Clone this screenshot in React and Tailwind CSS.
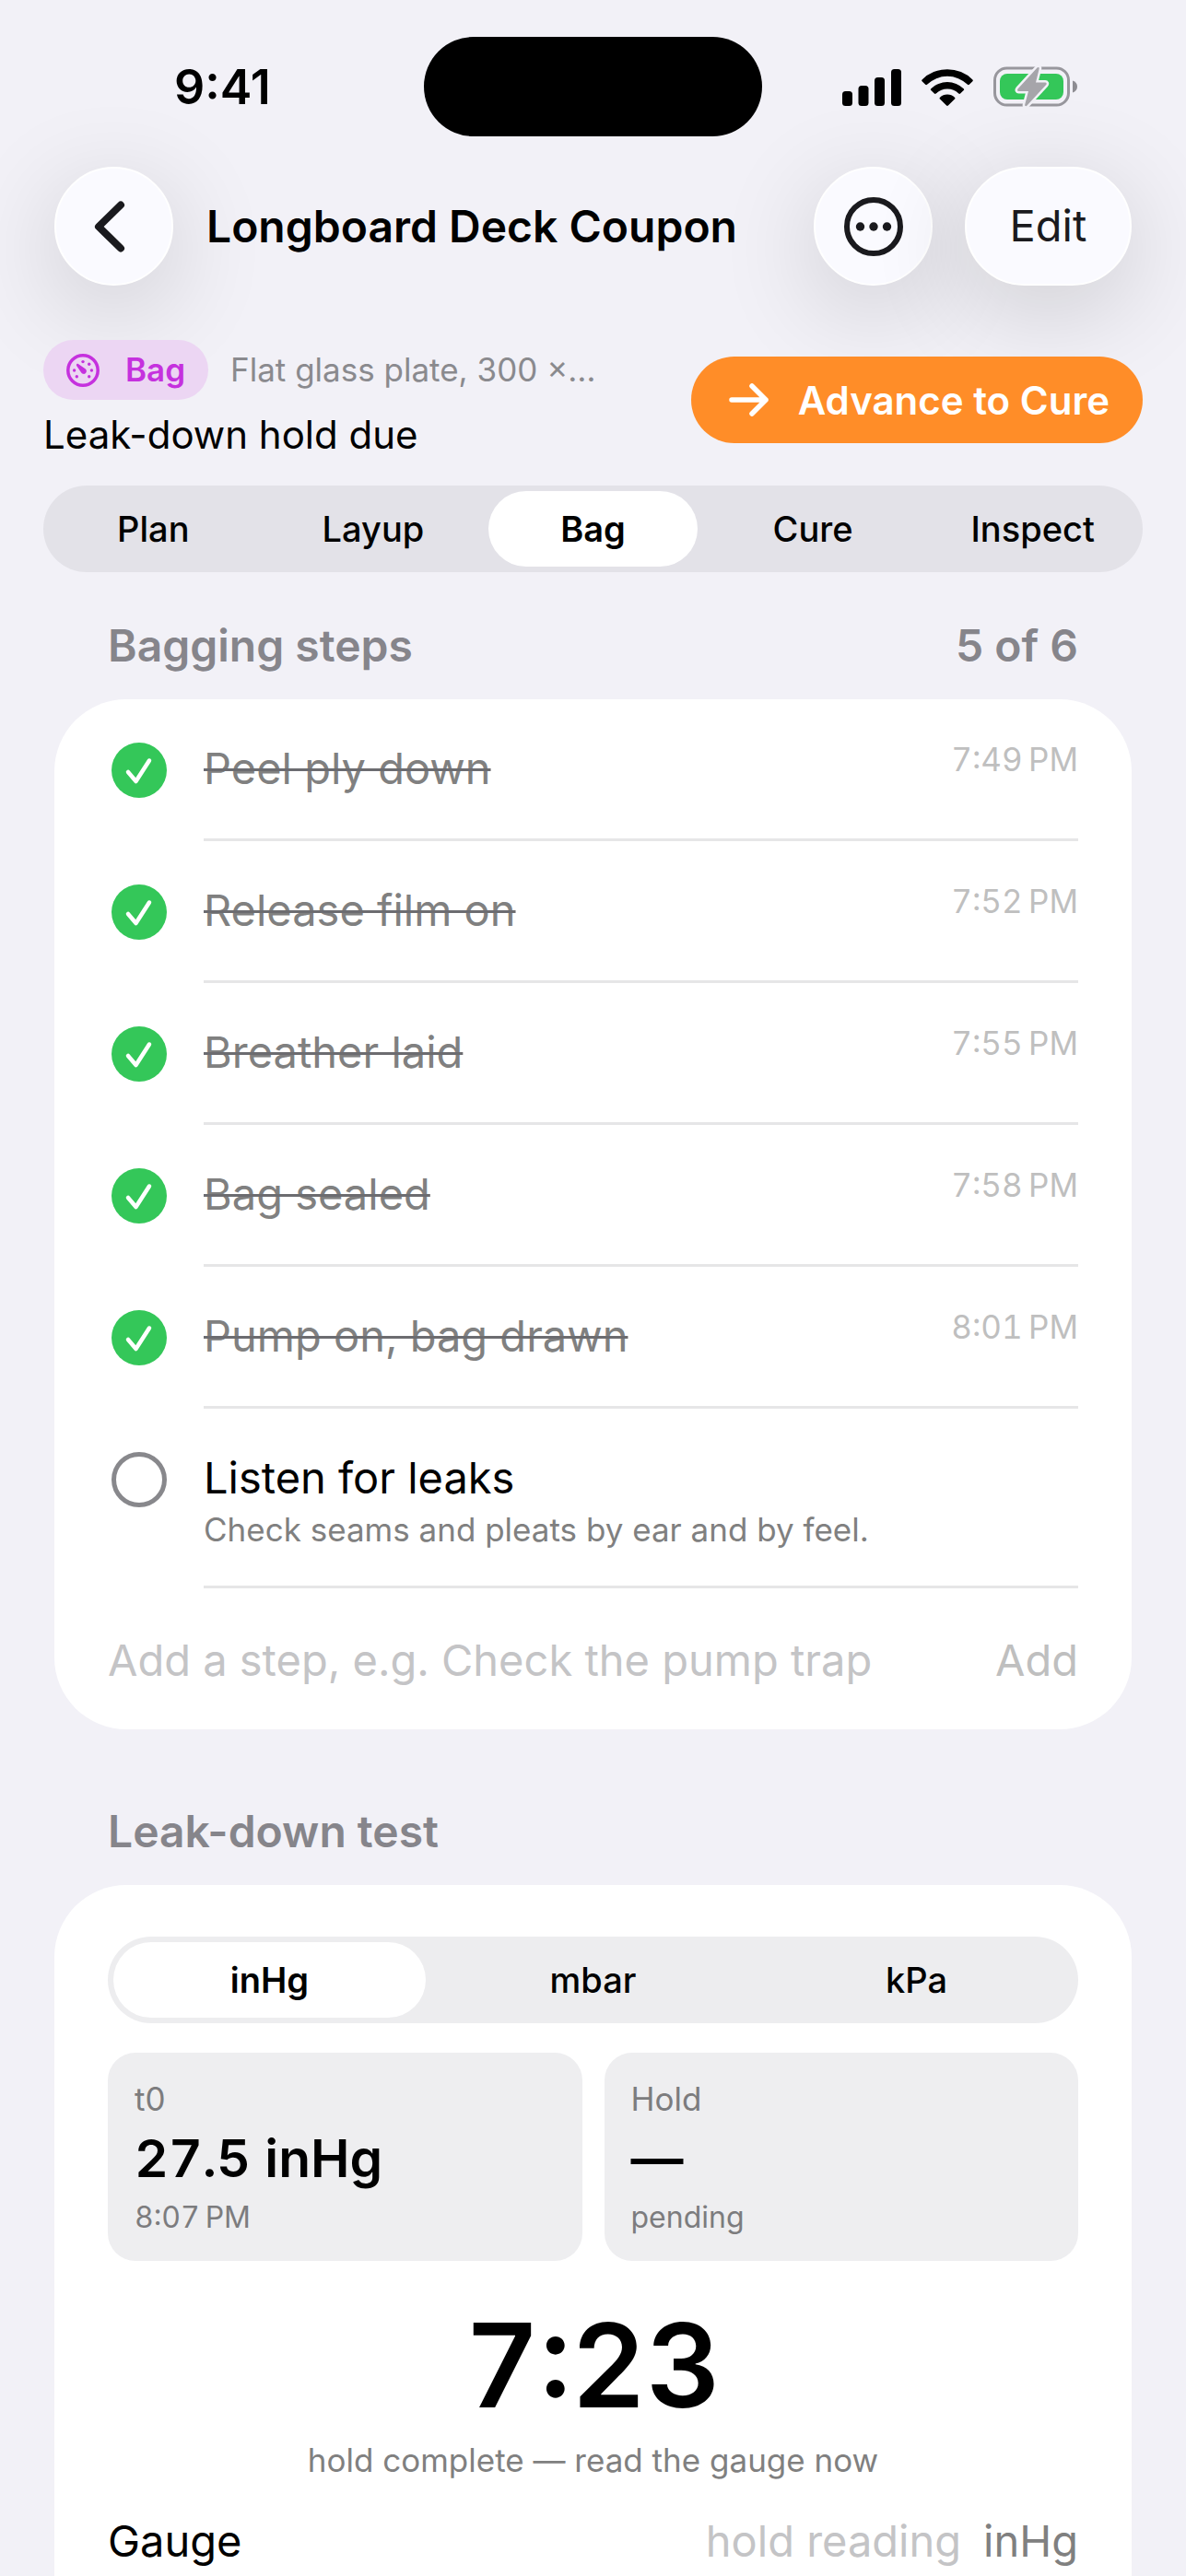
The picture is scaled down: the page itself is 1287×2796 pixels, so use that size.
import { useState } from "react";

const STAGES = ["Plan", "Layup", "Bag", "Cure", "Inspect"];
const UNITS = ["inHg", "mbar", "kPa"];

const INITIAL_STEPS = [
    { id: 1, title: "Peel ply down", time: "7:49\u2009PM", done: true },
    { id: 2, title: "Release film on", time: "7:52\u2009PM", done: true },
    { id: 3, title: "Breather laid", time: "7:55\u2009PM", done: true },
    { id: 4, title: "Bag sealed", time: "7:58\u2009PM", done: true },
    { id: 5, title: "Pump on, bag drawn", time: "8:01\u2009PM", done: true },
    { id: 6, title: "Listen for leaks", note: "Check seams and pleats by ear and by feel.", done: false },
];

const SignalIcon = () => (
    <svg className="w-16 h-[41px]" viewBox="0 0 64 41" aria-hidden="true">
        <rect x="0" y="25" width="11" height="16" rx="3.5" />
        <rect x="17.5" y="19" width="11" height="22" rx="3.5" />
        <rect x="35" y="10" width="11" height="31" rx="3.5" />
        <rect x="53" y="1" width="11" height="40" rx="3.5" />
    </svg>
);

const WifiIcon = () => (
    <svg className="w-14 h-[41px]" viewBox="0 0 56 41" aria-hidden="true">
        <path d="M0.6 12.4a39 39 0 0 1 54.8 0c.6.6.6 1.2 0 1.8l-3.6 3.6c-.6.6-1.2.6-1.8 0a31.5 31.5 0 0 0-44 0c-.6.6-1.2.6-1.8 0L.6 14.2c-.6-.6-.6-1.2 0-1.8z" />
        <path d="M10.3 22.3a25.2 25.2 0 0 1 35.4 0c.6.6.6 1.2 0 1.8l-3.6 3.5c-.6.6-1.2.6-1.8 0a17.6 17.6 0 0 0-24.6 0c-.6.6-1.2.6-1.8 0l-3.6-3.5c-.6-.6-.6-1.2 0-1.8z" />
        <path d="M20 31.8a11.6 11.6 0 0 1 16 0c.6.6.6 1.1 0 1.7l-7.1 7c-.6.6-1.2.6-1.8 0l-7.1-7c-.6-.6-.6-1.1 0-1.7z" />
    </svg>
);

const BatteryIcon = () => (
    <svg className="w-[91px] h-11" viewBox="0 0 91 44" aria-hidden="true">
        <rect x="1.5" y="2" width="80" height="40" rx="13" fill="none" stroke="#98979d" strokeWidth="3" />
        <path d="M86 15.5c3.2 1 5 3.4 5 6.5s-1.8 5.500-5 6.500z" fill="#8d8c92" />
        <rect x="7" y="8" width="69" height="28" rx="8" fill="#34c759" />
        <path
            d="M47.5 1.5L26.5 24.5c-1 1.2-.4 2.5 1 2.5H38l-3.8 14.5c-.4 1.8 1.3 2.2 2.3 1L57.2 20c1-1.2.4-2.6-1-2.6H46l3.7-14.8c.4-1.6-1.2-2.2-2.2-1.1z"
            fill="#a6a5aa"
            stroke="#f2f1f7"
            strokeWidth="5"
            paintOrder="stroke"
        />
    </svg>
);

const GaugeIcon = () => (
    <svg className="w-9 h-9" viewBox="0 0 36 36" fill="currentColor" aria-hidden="true">
        <circle cx="18" cy="18" r="16.2" fill="none" stroke="currentColor" strokeWidth="3.5" />
        <path d="M11.2 11.2c.5-.5 1.100-.5 1.700-.100l7.600 5.100a3.100 3.100 0 1 1-4.300 4.300l-5.100-7.600c-.4-.6-.4-1.200.1-1.700z" />
        <circle cx="18" cy="8.600" r="1.700" />
        <circle cx="24.700" cy="11.300" r="1.700" />
        <circle cx="27.400" cy="18" r="1.700" />
        <circle cx="24.700" cy="24.700" r="1.700" />
        <circle cx="11.300" cy="24.700" r="1.700" />
        <circle cx="8.600" cy="18" r="1.700" />
    </svg>
);

const SegmentedControl = ({ label, options, value, onChange, trackClass }) => (
    <div role="group" aria-label={label} className={`flex h-[94px] rounded-full ${trackClass}`}>
        {options.map((option) => (
            <button
                key={option}
                type="button"
                aria-pressed={option === value}
                onClick={() => onChange(option)}
                className={`flex-1 m-1.5 rounded-full text-[38px] leading-none ${option === value ? "bg-white font-semibold" : "font-medium"
                    }`}
            >
                {option}
            </button>
        ))}
    </div>
);

const StepRow = ({ step, onToggle }) => {
    const inputId = `step-${step.id}`;
    return (
        <li className="flex pl-[62px] pr-[58px]">
            <div className="relative size-[60px] mt-[47px] mr-10 shrink-0">
                <input
                    id={inputId}
                    type="checkbox"
                    checked={step.done}
                    onChange={() => onToggle(step.id)}
                    className="peer block size-[60px] appearance-none rounded-full border-[5px] border-[#88888c] checked:border-0 checked:bg-[#34c759]"
                />
                <svg
                    className="absolute inset-0 hidden size-[60px] pointer-events-none peer-checked:block"
                    viewBox="0 0 60 60"
                    fill="none"
                    stroke="white"
                    strokeWidth="4.5"
                    strokeLinecap="round"
                    strokeLinejoin="round"
                    aria-hidden="true"
                >
                    <path d="M18 32L26.500 42L41 19.500" />
                </svg>
            </div>
            <div className="flex min-h-[154px] flex-1 items-start justify-between border-b-[3px] border-[#e6e6e7] pt-[45px] pb-10">
                <div>
                    <label
                        htmlFor={inputId}
                        className={`block text-[47px] leading-[60px] ${step.done ? "text-[#808080] line-through decoration-[#6c6c70] decoration-[3px]" : "text-black"
                            }`}
                    >
                        {step.title}
                    </label>
                    {step.note && <p className="pt-1.5 text-[35px] leading-[41px] text-[#808080]">{step.note}</p>}
                </div>
                {step.time && <span className="text-[35px] leading-[41px] text-[#bfbfbf] tabular-nums">{step.time}</span>}
            </div>
        </li>
    );
};

const ReadingCard = ({ label, value, detail }) => (
    <div className="flex-1 rounded-[30px] bg-[#eeeef0] pt-[30px] px-[29px] pb-[27px]">
        <p className="text-[35px] leading-[41px] text-[#7c7c7e]">{label}</p>
        <p className="py-1 text-[57px] leading-[79px] font-semibold tabular-nums">{value}</p>
        <p className="text-[32px] leading-[41px] text-[#7c7c7e] tabular-nums">{detail}</p>
    </div>
);

const App = () => {
    const [stage, setStage] = useState("Bag");
    const [unit, setUnit] = useState("inHg");
    const [steps, setSteps] = useState(INITIAL_STEPS);
    const [draft, setDraft] = useState("");
    const [reading, setReading] = useState("");

    const doneCount = steps.filter((s) => s.done).length;

    const toggleStep = (id) => {
        setSteps((prev) => prev.map((s) => (s.id === id ? { ...s, done: !s.done } : s)));
    };

    const addStep = () => {
        if (!draft.trim()) return;
        setSteps((prev) => [...prev, { id: prev.length + 1, title: draft.trim(), done: false }]);
        setDraft("");
    };

    return (
        <div className="flex min-h-screen flex-col bg-[#f2f1f7] font-['Inter',sans-serif] text-black">
            {/* Status bar */}
            <div className="grid grid-cols-[1fr_367px_1fr] items-center pt-10">
                <span className="pl-[189px] pt-0.5 text-[52px] leading-[60px] font-semibold">9:41</span>
                <div className="h-[108px] rounded-full bg-black" />
                <div className="flex items-center justify-end gap-[22px] pr-[118px]">
                    <SignalIcon />
                    <WifiIcon />
                    <BatteryIcon />
                </div>
            </div>

            {/* Navigation bar */}
            <header className="flex items-center pt-[33px] px-[59px]">
                <button
                    type="button"
                    aria-label="Back"
                    className="flex size-[129px] items-center justify-center rounded-full border-2 border-white bg-[#fafaff] shadow-[0_24px_110px_rgba(0,0,0,0.16)]"
                >
                    <svg className="w-11 h-14" viewBox="0 0 44 56" fill="none" stroke="#1a1a1e" strokeWidth="8" strokeLinecap="round" strokeLinejoin="round" aria-hidden="true">
                        <path d="M29 4.500L5 28L29 51.500" />
                    </svg>
                </button>
                <h1 className="flex-1 pl-9 text-[48px] leading-[60px] font-semibold whitespace-nowrap">Longboard Deck Coupon</h1>
                <button
                    type="button"
                    aria-label="More"
                    className="flex size-[129px] items-center justify-center rounded-full border-2 border-white bg-[#fafaff] shadow-[0_24px_110px_rgba(0,0,0,0.16)]"
                >
                    <svg className="size-16" viewBox="0 0 64 64" fill="#1a1a1e" aria-hidden="true">
                        <circle cx="32" cy="32" r="29" fill="none" stroke="#1a1a1e" strokeWidth="6" />
                        <circle cx="17.500" cy="32" r="4.700" />
                        <circle cx="32" cy="32" r="4.700" />
                        <circle cx="46.500" cy="32" r="4.700" />
                    </svg>
                </button>
                <button
                    type="button"
                    className="ml-[35px] h-[129px] w-[181px] rounded-full border-2 border-white bg-[#fafaff] text-[47px] text-[#1a1a1e] shadow-[0_24px_110px_rgba(0,0,0,0.16)]"
                >
                    Edit
                </button>
            </header>

            {/* Stage summary */}
            <div className="flex items-start justify-between px-[47px] pt-[59px]">
                <div>
                    <div className="flex items-center gap-6">
                        <span className="flex h-[65px] items-center gap-7 rounded-full bg-[#ecd6f3] px-[25px] text-[35px] font-semibold text-[#c531de]">
                            <GaugeIcon />
                            Bag
                        </span>
                        <span className="text-[35px] leading-[41px] text-[#8a8a8e]">Flat glass plate, 300 ×…</span>
                    </div>
                    <p className="pt-2 text-[42px] leading-[60px]">Leak-down hold due</p>
                </div>
                <button
                    type="button"
                    className="mt-[18px] flex h-[94px] items-center gap-8 rounded-full bg-[#ff8d28] pl-10 pr-9 text-[42px] font-semibold text-white"
                >
                    <svg className="w-11 h-9" viewBox="0 0 44 36" fill="none" stroke="currentColor" strokeWidth="5.500" strokeLinecap="round" strokeLinejoin="round" aria-hidden="true">
                        <path d="M4 18H41M26 3L41 18L26 33" />
                    </svg>
                    Advance to Cure
                </button>
            </div>

            <div className="px-[47px] pt-[25px]">
                <SegmentedControl label="Stage" options={STAGES} value={stage} onChange={setStage} trackClass="bg-[#e3e2e8]" />
            </div>

            {/* Bagging steps */}
            <section className="px-[59px] pt-[50px]">
                <div className="flex justify-between px-[58px] text-[48px] leading-[60px] font-semibold text-[#86858b]">
                    <h2>Bagging steps</h2>
                    <span>{doneCount} of {steps.length}</span>
                </div>
                <div className="mt-7 rounded-[78px] bg-white">
                    <ul>
                        {steps.map((step) => (
                            <StepRow key={step.id} step={step} onToggle={toggleStep} />
                        ))}
                    </ul>
                    <div className="flex items-center justify-between px-[58px] pt-12 pb-[45px] text-[47px] leading-[60px]">
                        <input
                            type="text"
                            aria-label="New step"
                            placeholder="Add a step, e.g. Check the pump trap"
                            value={draft}
                            onChange={(e) => setDraft(e.target.value)}
                            className="h-[60px] min-w-0 flex-1 outline-none placeholder:text-[#c4c4c6]"
                        />
                        <button type="button" onClick={addStep} className="text-[#bfbfbf]">
                            Add
                        </button>
                    </div>
                </div>
            </section>

            {/* Leak-down test */}
            <section className="flex flex-1 flex-col px-[59px] pt-[81px]">
                <h2 className="px-[58px] text-[48px] leading-[60px] font-semibold text-[#86858b]">Leak-down test</h2>
                <div className="mt-7 flex-1 rounded-t-[78px] bg-white px-[58px] pt-14">
                    <SegmentedControl label="Unit" options={UNITS} value={unit} onChange={setUnit} trackClass="bg-[#ededef]" />
                    <div className="mt-8 flex gap-6">
                        <ReadingCard label="t0" value="27.5 inHg" detail={"8:07\u2009PM"} />
                        <ReadingCard label="Hold" value="—" detail="pending" />
                    </div>
                    <p className="pt-12 text-center text-[126px] leading-[130px] font-semibold tabular-nums">7:23</p>
                    <p className="pt-[18px] text-center text-[35px] leading-[41px] text-[#808080]">hold complete — read the gauge now</p>
                    <div className="flex items-center pt-[37px] text-[47px] leading-[60px]">
                        <label htmlFor="gauge">Gauge</label>
                        <input
                            id="gauge"
                            type="text"
                            placeholder="hold reading"
                            value={reading}
                            onChange={(e) => setReading(e.target.value)}
                            className="h-[60px] min-w-0 flex-1 text-right outline-none placeholder:text-[#c4c4c6]"
                        />
                        <span className="pl-6 text-[#808080]">{unit}</span>
                    </div>
                </div>
            </section>
        </div>
    );
};

export default App;
